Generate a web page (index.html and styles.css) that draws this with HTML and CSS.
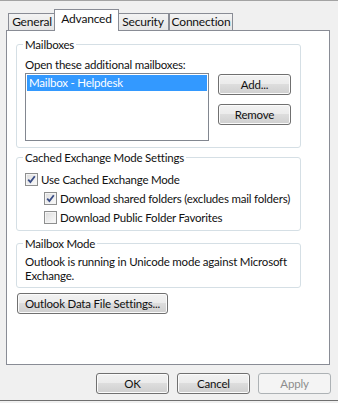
FILE: index.html
```html
<html lang="en">
<head>
    <meta charset="UTF-8">
    <title>Account Settings - Advanced</title>
    <link rel="stylesheet" href="styles.css">
</head>
<body>
    <div class="window">
        <div class="tabs">
            <div class="tab tab-general">General</div>
            <div class="tab tab-advanced active">Advanced</div>
            <div class="tab tab-security">Security</div>
            <div class="tab tab-connection">Connection</div>
        </div>

        <div class="panel">
            <fieldset class="group group-mailboxes">
                <legend>Mailboxes</legend>
                <div class="caption">Open these additional mailboxes:</div>
                <div class="mailbox-row">
                    <div class="listbox">
                        <div class="item selected">Mailbox - Helpdesk</div>
                    </div>
                    <div class="side-buttons">
                        <button class="btn">Add...</button>
                        <button class="btn">Remove</button>
                    </div>
                </div>
            </fieldset>

            <fieldset class="group group-cached">
                <legend>Cached Exchange Mode Settings</legend>
                <div class="check-row">
                    <span class="checkbox checked">
                        <svg width="9" height="9" viewBox="0 0 9 9"><path d="M1.2 4.6 L3.4 7 L7.8 1.2" fill="none" stroke="#3a4d86" stroke-width="1.8"/></svg>
                    </span>
                    <span>Use Cached Exchange Mode</span>
                </div>
                <div class="check-row indent">
                    <span class="checkbox checked">
                        <svg width="9" height="9" viewBox="0 0 9 9"><path d="M1.2 4.6 L3.4 7 L7.8 1.2" fill="none" stroke="#3a4d86" stroke-width="1.8"/></svg>
                    </span>
                    <span>Download shared folders (excludes mail folders)</span>
                </div>
                <div class="check-row indent">
                    <span class="checkbox"></span>
                    <span>Download Public Folder Favorites</span>
                </div>
            </fieldset>

            <fieldset class="group group-mode">
                <legend>Mailbox Mode</legend>
                <p class="mode-text">Outlook is running in Unicode mode against Microsoft<br>Exchange.</p>
            </fieldset>

            <button class="btn btn-datafile">Outlook Data File Settings...</button>
        </div>

        <div class="footer">
            <button class="btn">OK</button>
            <button class="btn">Cancel</button>
            <button class="btn" disabled>Apply</button>
        </div>
    </div>
</body>
</html>
```

FILE: styles.css
```css
* {
    margin: 0;
    padding: 0;
    box-sizing: border-box;
}
body {
    background: #f0f0f0;
    font-family: Lato, 'Liberation Sans', sans-serif;
    font-size: 11.5px;
    letter-spacing: -0.2px;
    color: #111;
    width: 338px;
    height: 403px;
    overflow: hidden;
    white-space: nowrap;
}
.window {
    height: 401px;
    border-top: 1px solid #a3a3a3;
    border-bottom: 1px solid #6f6f6f;
}

/* tabs */
.tabs {
    display: flex;
    align-items: flex-end;
    height: 29px;
    padding-left: 8px;
}
.tab {
    height: 17px;
    line-height: 16px;
    text-align: center;
    border: 1px solid #898c95;
    border-bottom: none;
    background: linear-gradient(#f3f3f3, #e5e5e5);
    font-size: 12px;
}
.tab-general { width: 48px; }
.tab-security { width: 52px; }
.tab-connection { width: 64px; }
.tab.active {
    width: 65px;
    height: 22px;
    margin: 0 -2px -1px -2px;
    background: #fff;
    position: relative;
    z-index: 1;
    line-height: 17px;
}

/* panel */
.panel {
    margin-left: 6px;
    width: 324px;
    height: 335px;
    background: #fff;
    border: 1px solid #898c95;
    padding: 6px 0 0 9px;
}
.group {
    width: 285px;
    min-width: 0;
    border: 1px solid #d5dfe5;
    border-radius: 3px;
    padding: 0 8px;
}
.group legend {
    margin-left: -2px;
    padding: 0 2px;
    line-height: 15px;
}
.caption {
    margin-top: 5px;
    line-height: 15px;
}
.mailbox-row {
    display: flex;
    gap: 9px;
    margin-top: 1px;
    padding-bottom: 6px;
}
.listbox {
    width: 184px;
    height: 68px;
    border: 1px solid #828790;
    padding: 1px;
}
.item {
    height: 16px;
    line-height: 15px;
    padding-left: 2px;
}
.item.selected {
    background: #3399ff;
    color: #fff;
}
.side-buttons {
    display: flex;
    flex-direction: column;
    gap: 9px;
    padding-top: 1px;
}

/* buttons */
.btn {
    width: 73px;
    height: 21px;
    font-family: inherit;
    font-size: 11.5px;
    letter-spacing: -0.2px;
    color: #111;
    border: 1px solid #707070;
    border-radius: 3px;
    background: linear-gradient(#f2f2f2 0%, #ebebeb 50%, #dddddd 50%, #cfcfcf 100%);
    box-shadow: inset 0 0 0 1px #fbfbfb;
    white-space: nowrap;
}
.btn:disabled {
    color: #8d8d8d;
    border-color: #adb2b5;
    background: #f4f4f4;
    box-shadow: none;
}

/* cached mode */
.group-cached {
    margin-top: 2px;
    padding-top: 5px;
    padding-bottom: 3px;
}
.check-row {
    display: flex;
    align-items: center;
    height: 19px;
    gap: 3px;
}
.check-row.indent {
    padding-left: 19px;
}
.checkbox {
    width: 13px;
    height: 13px;
    border: 1px solid #8e8f8f;
    background: linear-gradient(135deg, #dcdcdc, #fbfbfb);
    box-shadow: inset 0 0 0 1px #f4f4f4;
    display: flex;
    align-items: center;
    justify-content: center;
}

/* mailbox mode */
.group-mode {
    margin-top: 5px;
    padding-top: 4px;
    padding-bottom: 4px;
}
.mode-text {
    line-height: 14px;
}
.btn-datafile {
    width: 151px;
    margin: 5px 0 0 1px;
}

/* footer */
.footer {
    display: flex;
    justify-content: flex-end;
    gap: 8px;
    padding: 8px 7px 0 0;
}
```
